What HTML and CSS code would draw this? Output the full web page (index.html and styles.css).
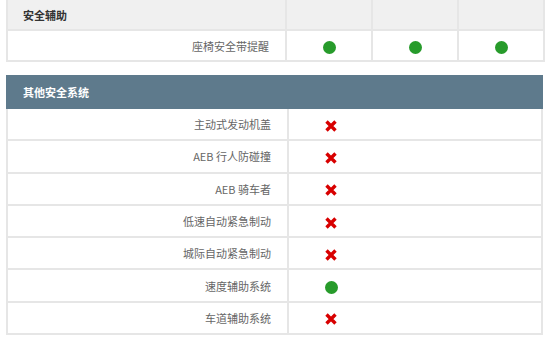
FILE: index.html
```html
<!DOCTYPE html>
<html lang="zh">
<head>
<meta charset="utf-8">
<link rel="stylesheet" href="styles.css">
</head>
<body>
<table class="spec spec-top">
  <colgroup><col class="c-label"><col class="c-val"><col class="c-val"><col class="c-val"></colgroup>
  <tr class="head-light"><th class="group">安全辅助</th><th></th><th></th><th></th></tr>
  <tr><td class="label">座椅安全带提醒</td><td class="val"><span class="dot"></span></td><td class="val"><span class="dot"></span></td><td class="val"><span class="dot"></span></td></tr>
</table>

<table class="spec spec-bottom">
  <colgroup><col class="c-label2"><col></colgroup>
  <tr class="head-dark"><th class="group" colspan="2">其他安全系统</th></tr>
  <tr><td class="label">主动式发动机盖</td><td class="val2"><span class="cell"><svg class="cross" viewBox="0 0 14 14"><path d="M2.5 2.5 L11.5 11.5 M11.5 2.5 L2.5 11.5"/></svg></span></td></tr>
  <tr><td class="label">AEB 行人防碰撞</td><td class="val2"><span class="cell"><svg class="cross" viewBox="0 0 14 14"><path d="M2.5 2.5 L11.5 11.5 M11.5 2.5 L2.5 11.5"/></svg></span></td></tr>
  <tr><td class="label">AEB 骑车者</td><td class="val2"><span class="cell"><svg class="cross" viewBox="0 0 14 14"><path d="M2.5 2.5 L11.5 11.5 M11.5 2.5 L2.5 11.5"/></svg></span></td></tr>
  <tr><td class="label">低速自动紧急制动</td><td class="val2"><span class="cell"><svg class="cross" viewBox="0 0 14 14"><path d="M2.5 2.5 L11.5 11.5 M11.5 2.5 L2.5 11.5"/></svg></span></td></tr>
  <tr><td class="label">城际自动紧急制动</td><td class="val2"><span class="cell"><svg class="cross" viewBox="0 0 14 14"><path d="M2.5 2.5 L11.5 11.5 M11.5 2.5 L2.5 11.5"/></svg></span></td></tr>
  <tr><td class="label">速度辅助系统</td><td class="val2"><span class="cell"><span class="dot"></span></span></td></tr>
  <tr><td class="label">车道辅助系统</td><td class="val2"><span class="cell"><svg class="cross" viewBox="0 0 14 14"><path d="M2.5 2.5 L11.5 11.5 M11.5 2.5 L2.5 11.5"/></svg></span></td></tr>
</table>
</body>
</html>
```
FILE: styles.css
```css
html, body {
  margin: 0;
  padding: 0;
  background: #fff;
}
body {
  font-family: "Noto Sans CJK SC", "Noto Sans", sans-serif;
  font-size: 11px;
  color: #666;
}
.spec {
  border-collapse: collapse;
  table-layout: fixed;
  width: 537px;
  margin-left: 6px;
}
.spec-top .c-label { width: 279px; }
.spec-top .c-val { width: 86px; }
.spec-bottom { margin-top: 13px; }
.spec-bottom .c-label2 { width: 281px; }

.spec th, .spec td {
  border: 2px solid #e6e6e6;
  padding: 0;
}
.head-light th {
  height: 29px;
  background: #f0f0f0;
  border-top: none;
}
.head-dark th {
  height: 30px;
  background: #5e7a8c;
  border-color: #5e7a8c;
  color: #fff;
}
.group {
  text-align: left;
  padding-left: 15px !important;
  font-weight: bold;
  font-size: 11px;
  color: #333;
}
.head-dark .group { color: #fff; }
.spec-top td { height: 29px; }
.spec-bottom td { height: 30.3px; }
.label {
  text-align: right;
  padding-right: 16px !important;
  color: #666;
}
.val {
  text-align: center;
}
.val2 {
  text-align: left;
}
.cell {
  display: inline-flex;
  width: 84px;
  justify-content: center;
  align-items: center;
  vertical-align: middle;
}
.dot {
  display: inline-block;
  width: 13px;
  height: 13px;
  border-radius: 50%;
  background: #279b2b;
  vertical-align: middle;
}
.cross {
  width: 14px;
  height: 14px;
  display: block;
  fill: none;
  stroke: #d80000;
  stroke-width: 3.4;
  stroke-linecap: butt;
}
```
